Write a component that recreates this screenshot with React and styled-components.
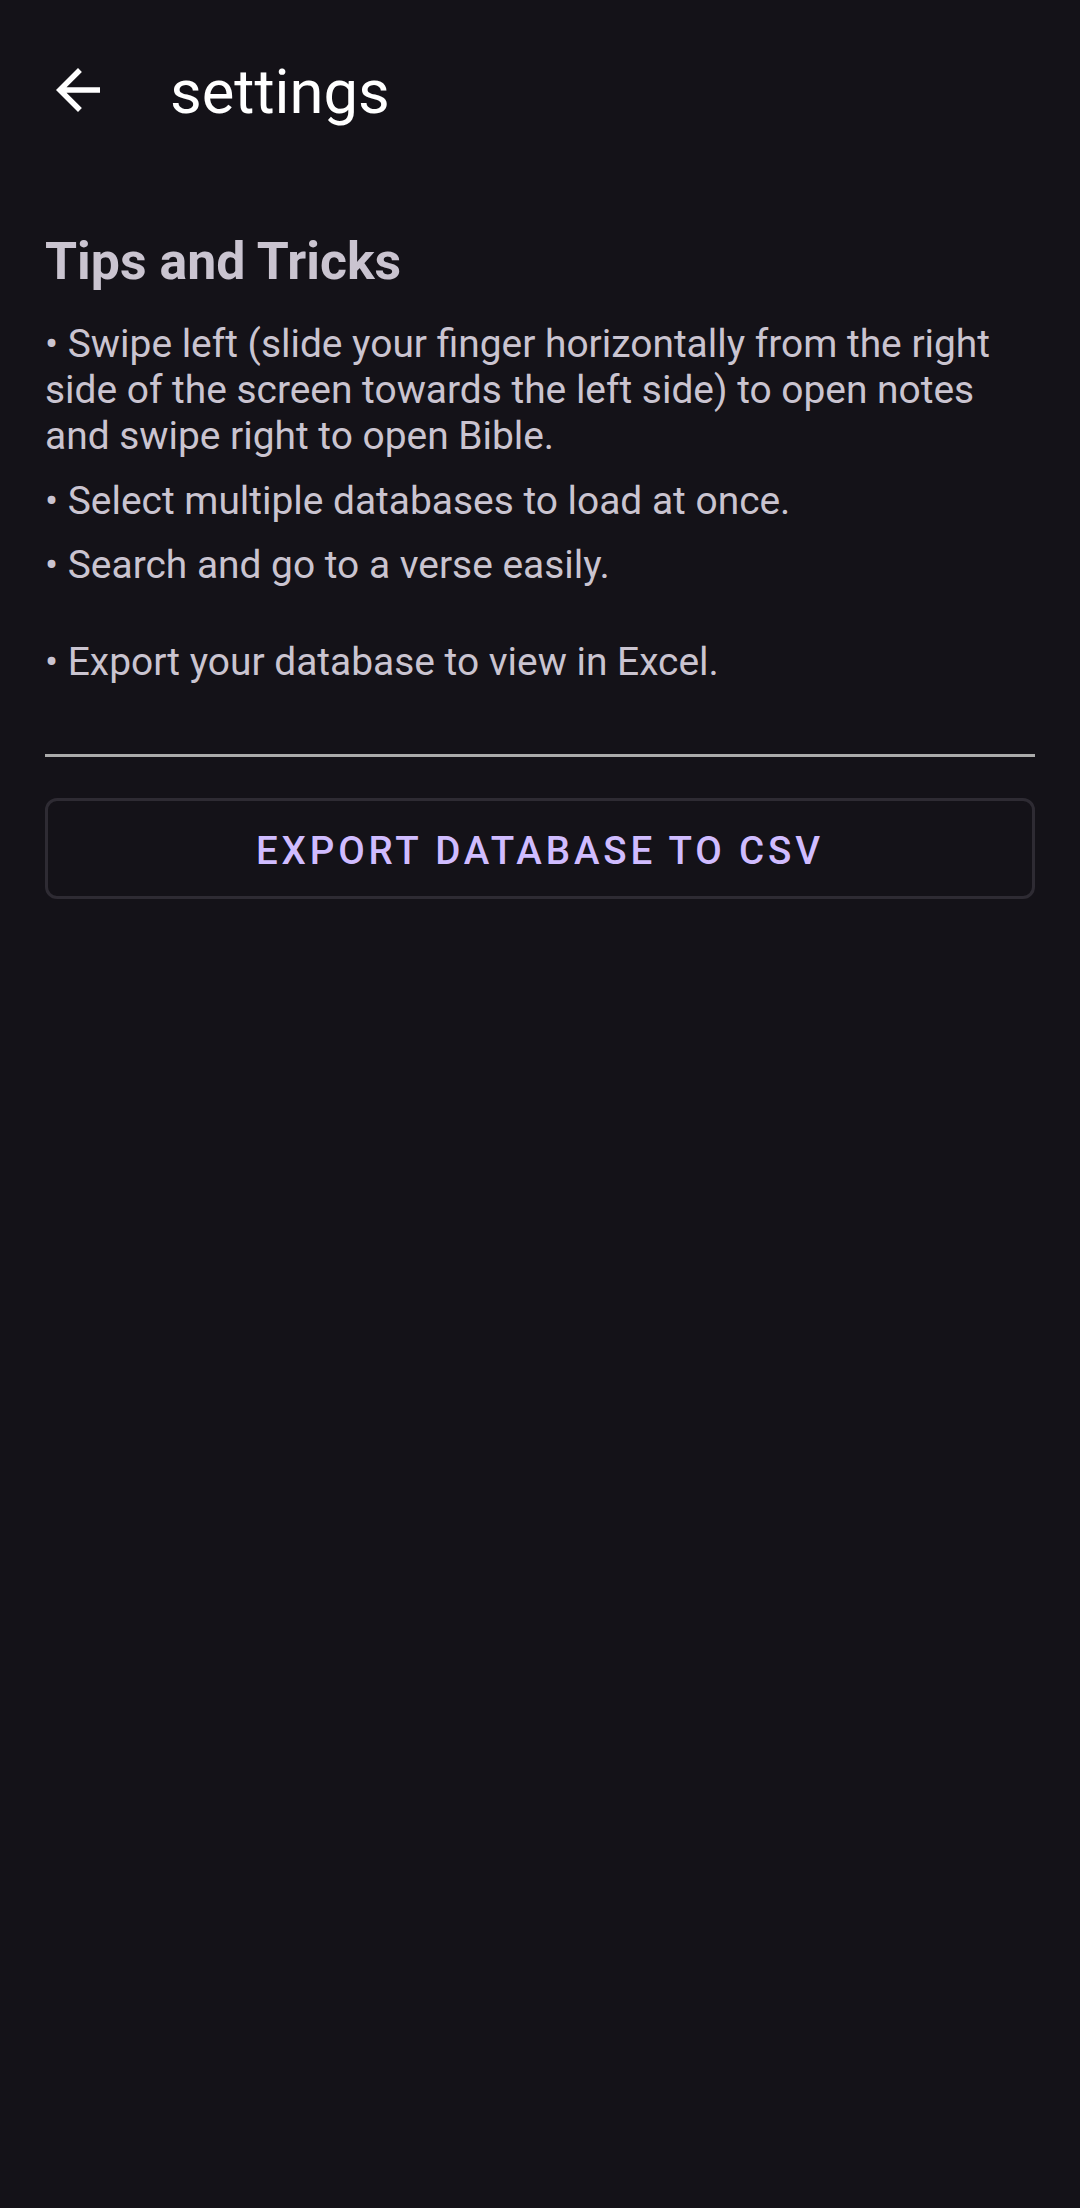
import React from 'react';
import styled, { createGlobalStyle } from 'styled-components';

const GlobalStyle = createGlobalStyle`
  html, body {
    margin: 0;
    padding: 0;
    background: #141218;
  }
  body {
    font-family: Roboto, "Noto Sans", sans-serif;
  }
`;

const Screen = styled.div`
  min-height: 2208px;
  background: #141218;
  color: #cac4d0;
`;

const TopBar = styled.header`
  height: 180px;
  display: flex;
  align-items: center;
  padding-left: 45px;
  gap: 59px;
`;

const BackButton = styled.button`
  width: 66px;
  height: 66px;
  padding: 0;
  border: none;
  background: transparent;
  color: #ffffff;
  display: flex;
  align-items: center;
  justify-content: center;
  cursor: pointer;
`;

const Title = styled.h1`
  margin: 4px 0 0;
  font-size: 61.5px;
  font-weight: 400;
  line-height: 72px;
  color: #ffffff;
`;

const Content = styled.main`
  padding: 0 45px;
  display: flex;
  flex-direction: column;
`;

const Heading = styled.h2`
  margin: 50px 0 0;
  font-size: 51.8px;
  line-height: 64px;
  font-weight: 700;
  color: #cac4d0;
`;

const Tip = styled.p`
  margin: ${p => p.$gap}px 0 0;
  font-size: 38.9px;
  line-height: 46px;
  font-weight: 400;
  color: #cac4d0;
`;

const Divider = styled.hr`
  margin: 69px 0 0;
  border: none;
  height: 3px;
  background: #ababab;
`;

const OutlineButton = styled.button`
  margin-top: 41px;
  height: 101px;
  width: 100%;
  padding: 3px 0 0;
  border: 3px solid #2e2b33;
  border-radius: 12px;
  background: transparent;
  color: #d0bcff;
  font-family: Roboto, "Noto Sans", sans-serif;
  font-size: 38.5px;
  font-weight: 500;
  letter-spacing: 0.1em;
  text-transform: uppercase;
  cursor: pointer;
`;

const tips = [
  { gap: 27, text: '• Swipe left (slide your finger horizontally from the right side of the screen towards the left side) to open notes and swipe right to open Bible.' },
  { gap: 19, text: '• Select multiple databases to load at once.' },
  { gap: 18, text: '• Search and go to a verse easily.' },
  { gap: 51, text: '• Export your database to view in Excel.' },
];

function ArrowBack() {
  return (
    <svg width="66" height="66" viewBox="0 0 24 24" fill="currentColor">
      <path d="M20 11H7.83l5.59-5.59L12 4l-8 8 8 8 1.41-1.41L7.83 13H20v-2z" />
    </svg>
  );
}

export default function App() {
  return (
    <>
      <GlobalStyle />
      <Screen>
        <TopBar>
          <BackButton aria-label="back">
            <ArrowBack />
          </BackButton>
          <Title>settings</Title>
        </TopBar>
        <Content>
          <Heading>Tips and Tricks</Heading>
          {tips.map((t, i) => (
            <Tip key={i} $gap={t.gap}>{t.text}</Tip>
          ))}
          <Divider />
          <OutlineButton>Export database to CSV</OutlineButton>
        </Content>
      </Screen>
    </>
  );
}
